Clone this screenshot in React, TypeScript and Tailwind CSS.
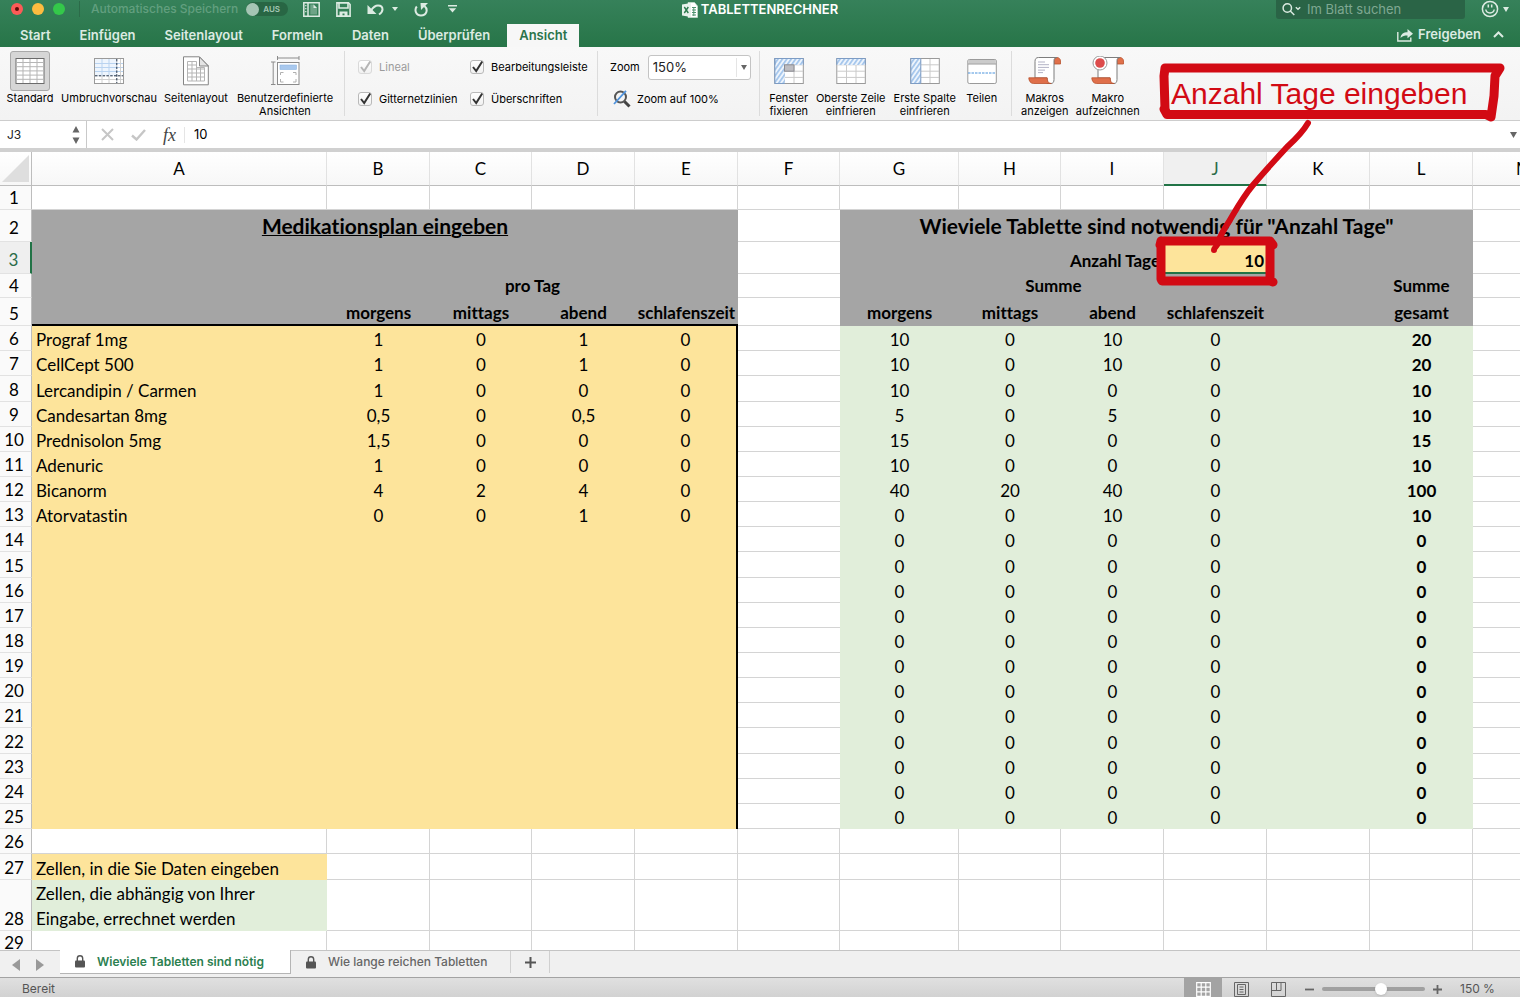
import { useState, type ReactNode } from 'react'
import clsx from 'clsx'

const TABS = ['Start', 'Einfügen', 'Seitenlayout', 'Formeln', 'Daten', 'Überprüfen', 'Ansicht']

const COLUMNS = [
  { name: 'A', width: 'w-[295px]' },
  { name: 'B', width: 'w-[103px]' },
  { name: 'C', width: 'w-[102px]' },
  { name: 'D', width: 'w-[103px]' },
  { name: 'E', width: 'w-[103px]' },
  { name: 'F', width: 'w-[102px]' },
  { name: 'G', width: 'w-[119px]' },
  { name: 'H', width: 'w-[102px]' },
  { name: 'I', width: 'w-[103px]' },
  { name: 'J', width: 'w-[103px]' },
  { name: 'K', width: 'w-[103px]' },
  { name: 'L', width: 'w-[103px]' },
  { name: 'M', width: 'w-[103px]' },
]

type Medication = { name: string; plan: string[]; sums: string[]; total: string }

const MEDICATIONS: Medication[] = [
  { name: 'Prograf 1mg', plan: ['1', '0', '1', '0'], sums: ['10', '0', '10', '0'], total: '20' },
  { name: 'CellCept 500', plan: ['1', '0', '1', '0'], sums: ['10', '0', '10', '0'], total: '20' },
  { name: 'Lercandipin / Carmen', plan: ['1', '0', '0', '0'], sums: ['10', '0', '0', '0'], total: '10' },
  { name: 'Candesartan 8mg', plan: ['0,5', '0', '0,5', '0'], sums: ['5', '0', '5', '0'], total: '10' },
  { name: 'Prednisolon 5mg', plan: ['1,5', '0', '0', '0'], sums: ['15', '0', '0', '0'], total: '15' },
  { name: 'Adenuric', plan: ['1', '0', '0', '0'], sums: ['10', '0', '0', '0'], total: '10' },
  { name: 'Bicanorm', plan: ['4', '2', '4', '0'], sums: ['40', '20', '40', '0'], total: '100' },
  { name: 'Atorvatastin', plan: ['0', '0', '1', '0'], sums: ['0', '0', '10', '0'], total: '10' },
]

const EMPTY: Medication = { name: '', plan: ['', '', '', ''], sums: ['0', '0', '0', '0'], total: '0' }

// Rows 6 to 25 of the sheet
const BODY_ROWS = Array.from({ length: 20 }, (_, i) => ({ row: i + 6, med: MEDICATIONS[i] ?? EMPTY }))

function StandardIcon() {
  return (
    <svg width="30" height="28" viewBox="0 0 30 28" fill="none">
      <rect x="1" y="1.5" width="28" height="25" fill="#fff" stroke="#6b6b6b" />
      <path d="M1 5.5h28M1 9.7h28M1 13.9h28M1 18.1h28M1 22.3h28M8 2v24M15 2v24M22 2v24" stroke="#b5b5b5" />
    </svg>
  )
}

function BreakPreviewIcon() {
  return (
    <svg width="30" height="28" viewBox="0 0 30 28" fill="none">
      <rect x=".5" y="1.5" width="29" height="25" fill="#fff" stroke="#9a9a9a" />
      <path d="M1 2h22v17H1z" fill="#eef5fd" />
      <path d="M1 6.5h28M1 10.5h28M1 14.5h28M8 2v16M15 2v16" stroke="#b9d3f0" />
      <path d="M1 22.5h28M8 19v7M15 19v7M26.5 2v24" stroke="#d0d0d0" />
      <path d="M22.8 2v24M1 18.8h28" stroke="#1f2f45" strokeDasharray="2.5 1.3" />
    </svg>
  )
}

function PageLayoutIcon() {
  return (
    <svg width="28" height="30" viewBox="0 0 28 30" fill="none">
      <path d="M1.5.8h16l8.800 9v19H1.500z" fill="#fff" stroke="#858585" />
      <path d="M17.500 1v9h8.800z" fill="#e4e4e4" stroke="#858585" />
      <path d="M5.500 5.500h9v6h8v13.500h-17zM5.500 9h9M5.500 13h17M5.500 17h17M5.500 21h17M10 5.500v19.500M14.500 10v15M18.500 12v13" stroke="#b5b5b5" />
    </svg>
  )
}

function CustomViewsIcon() {
  return (
    <svg width="30" height="30" viewBox="0 0 30 30" fill="none">
      <path d="M7.500 0v4M29 0v4M7.500 2h21.500M1 6h4.500M1 28.500h4.500M3.200 6v22" stroke="#8b8b8b" />
      <rect x="7.500" y="6.500" width="21.500" height="22" fill="#fff" stroke="#8b8b8b" />
      <rect x="10" y="9" width="16.500" height="4.500" fill="#a8c8ee" stroke="#8db4e2" strokeWidth=".6" />
      <path d="M10.500 19v-2.500h3M23 16.500h3v2.500M26 23v3h-3M13.500 26h-3v-3" stroke="#b0b0b0" />
    </svg>
  )
}

function FreezeIcon({ id, mode }: { id: string; mode: 'panes' | 'row' | 'column' }) {
  const top = mode !== 'column'
  const left = mode !== 'row'
  return (
    <svg width="30" height="28" viewBox="0 0 30 28" fill="none">
      <defs>
        <pattern id={id} width="3.600" height="3.600" patternUnits="userSpaceOnUse" patternTransform="rotate(35)">
          <rect width="3.600" height="3.600" fill="#edf4fc" />
          <rect width="1.700" height="3.600" fill="#a3c5ec" />
        </pattern>
      </defs>
      <rect x=".8" y="1.500" width="28.500" height="25" fill="#fff" stroke="#9a9a9a" />
      <path d="M1 7.800h28M1 14.200h28M1 20.400h28M10.500 2v24M20 2v24" stroke="#cacaca" />
      {top && <rect x="1" y="1.700" width="28" height="6.200" fill={`url(#${id})`} />}
      {left && <rect x="1" y="1.700" width="9.800" height="24.500" fill={`url(#${id})`} />}
      {top && <path d="M.8 7.800V1.500h28.500v6.300" stroke="#7d9cc4" />}
      {left && <path d="M10.800 1.500H.8v25h10" stroke="#7d9cc4" />}
      {mode === 'column' && <path d="M10.800 2v24" stroke="#7d9cc4" />}
      {mode === 'panes' && <rect x="10.500" y="7.800" width="9.500" height="6.400" fill="#bdbdc2" stroke="#8c8c92" />}
    </svg>
  )
}

function SplitIcon() {
  return (
    <svg width="30" height="28" viewBox="0 0 30 28" fill="none">
      <rect x=".8" y="2.500" width="28.500" height="24" rx="1.500" fill="#fff" stroke="#9a9a9a" />
      <path d="M1.300 3h27.500v3.800H1.300z" fill="#cbcbcb" />
      <path d="M1 7h28" stroke="#9a9a9a" />
      <path d="M1 16h28" stroke="#4a93dc" strokeDasharray="2.500 1" />
    </svg>
  )
}

function MacroIcon({ record }: { record?: boolean }) {
  return (
    <svg width="34" height="30" viewBox="0 0 34 30" fill="none">
      <path d="M26 8V4.500C26 2 27.500 1.500 29 1.500s3.500 1.200 3.500 3.500V8z" fill="#e0704a" stroke="#b9532f" strokeWidth=".8" />
      <path d="M29 1.500H10.500C8 1.500 7 3 7 5.500V22h12v5.500h4c2 0 3-1.500 3-4V4.500c0-2 1.300-3 3-3z" fill="#fff" stroke="#7d7d7d" />
      <path d="M.8 21.800h18.400c0 3 1 5.700 4 5.700H5.500c-3 0-4.700-2.700-4.700-5.700z" fill="#df6f4a" stroke="#b9532f" strokeWidth=".8" />
      {record ? (
        <>
          <circle cx="9" cy="7" r="7" fill="#fff" stroke="#9a9a9a" />
          <circle cx="9" cy="7" r="4.800" fill="#dd4c4c" />
        </>
      ) : (
        <path d="M10 6h7M10 8.700h11M10 11.400h11M10 14.100h7M10 16.600h5" stroke="#b3b3c6" />
      )}
    </svg>
  )
}

function RibbonButton({
  label,
  width,
  active,
  children,
}: {
  label: string[]
  width: string
  active?: boolean
  children: ReactNode
}) {
  return (
    <button type="button" className={clsx('flex flex-col items-center', width)}>
      <span
        className={clsx(
          'mb-px flex size-10 items-center justify-center rounded-[3px] border',
          active ? 'border-[#a9a9a9] bg-[#d6d6d6]' : 'border-transparent',
        )}
      >
        {children}
      </span>
      {label.map((line) => (
        <span key={line} className="block leading-[13px] whitespace-nowrap">
          {line}
        </span>
      ))}
    </button>
  )
}

function RibbonCheckbox({ label, disabled }: { label: string; disabled?: boolean }) {
  return (
    <label className={clsx('flex h-4 items-center gap-[6px] whitespace-nowrap', disabled && 'text-[#9b9b9b]')}>
      <span className="relative flex size-4">
        <input
          type="checkbox"
          defaultChecked
          disabled={disabled}
          className="m-px size-[14px] appearance-none rounded-[3px] border border-[#b9b9b9] bg-gradient-to-b from-white to-[#f1f1f1] disabled:border-[#d9d9d9]"
        />
        <svg className="pointer-events-none absolute inset-0" width="16" height="16" viewBox="0 0 16 16" fill="none">
          <path d="M4 8l3.200 4L13.200 2.500" stroke={disabled ? '#b5b5b5' : '#333'} strokeWidth="2" />
        </svg>
      </span>
      {label}
    </label>
  )
}

function Divider() {
  return <div className="my-1 w-px shrink-0 bg-[#dcdcdc]" />
}

function TitleBar() {
  return (
    <div className="grid h-[22px] grid-cols-[1fr_auto_1fr] text-white">
      <div className="flex h-[18px] items-center pl-[11px]">
        <div className="flex gap-[9px]">
          <button type="button" aria-label="Schließen" className="flex size-3 items-center justify-center rounded-full bg-[#fc5b57]">
            <span className="size-1 rounded-full bg-[#5c0b08]" />
          </button>
          <button type="button" aria-label="Minimieren" className="size-3 rounded-full bg-[#fdbc40]" />
          <button type="button" aria-label="Maximieren" className="size-3 rounded-full bg-[#34c84a]" />
        </div>
        <div className="ml-[14px] h-4 w-px bg-[#2c6b49]" />
        <span className="ml-[11px] text-[12px] font-medium whitespace-nowrap text-[#629f7f]">Automatisches Speichern</span>
        <button
          type="button"
          role="switch"
          aria-checked="false"
          className="ml-2 flex h-[14px] w-[42px] items-center gap-1 rounded-full bg-[#286644] text-[8px] font-semibold text-[#a3c6b3]"
        >
          <span className="size-[13px] rounded-full bg-[#a5c5b4]" />
          AUS
        </button>
        <div className="ml-[15px] flex items-center text-[#dcebe2]">
          <button type="button" aria-label="Vorlagen">
            <svg width="17" height="15" viewBox="0 0 17 15" fill="none" stroke="currentColor" strokeWidth="1.500">
              <path d="M.8.800h15.400v13.400H.8zM5 1v13" />
              <path d="M7.300 2.500h3.700l3 3v7H7.300z" fill="currentColor" stroke="none" opacity=".35" />
              <path d="M10.500 2.500v3.500H14z" fill="currentColor" stroke="none" />
              <path d="M2.800 3v1.200M2.800 6v1.200M2.800 9v1.200" strokeWidth="1.200" />
            </svg>
          </button>
          <button type="button" aria-label="Speichern" className="ml-4">
            <svg width="15" height="15" viewBox="0 0 15 15" fill="none" stroke="currentColor" strokeWidth="1.600">
              <path d="M.9.900h11.600l1.600 1.600v11.600H.9z" />
              <path d="M3 1v5h9V1" />
              <path d="M3.500 14.500V9.500h8v5h-3v-3h-2v3z" fill="currentColor" stroke="none" />
            </svg>
          </button>
          <button type="button" aria-label="Rückgängig" className="ml-4">
            <svg width="17" height="14" viewBox="0 0 17 14" fill="none" stroke="currentColor" strokeWidth="2">
              <path d="M.5 3v9h9z" fill="currentColor" stroke="none" />
              <path d="M4 8.500C6 5.500 8.300 3.500 11 3.500c2.600 0 4.500 1.500 4.500 4 0 2.200-1.500 3.600-3.500 5" />
            </svg>
          </button>
          <button type="button" aria-label="Rückgängig Optionen" className="ml-2">
            <svg width="6" height="4" viewBox="0 0 6 4" fill="currentColor"><path d="M0 0h6L3 4z" /></svg>
          </button>
          <button type="button" aria-label="Wiederholen" className="ml-4">
            <svg width="14" height="15" viewBox="0 0 14 15" fill="none" stroke="currentColor" strokeWidth="2">
              <path d="M2.800 4.500C.3 7.500 1.500 13.500 7 13.500s7.500-6 3.500-9.500" />
              <path d="M6.500 1H14L7 8z" fill="currentColor" stroke="none" />
            </svg>
          </button>
          <button type="button" aria-label="Symbolleiste anpassen" className="ml-5">
            <svg width="9" height="8" viewBox="0 0 9 8" fill="currentColor"><path d="M0 0h9v1.400H0zM.8 3.300h7.400L4.500 7.600z" /></svg>
          </button>
        </div>
      </div>
      <h1 className="flex h-[19px] items-center gap-[3px] text-[13px] font-semibold">
        <svg width="16" height="16" viewBox="0 0 16 16" fill="none">
          <path d="M6 .5h6.500L15.500 4v11.500H6z" fill="#fff" stroke="#cfe2d7" strokeWidth=".6" />
          <path d="M10 5.500h4M10 8h4M10 10.500h4M10 13h4M11.800 5v9" stroke="#4f9370" />
          <path d="M0 2.500l9-1.500v14L0 13.500z" fill="#e8f2ec" />
          <path d="M2.300 5l4 6M6.300 5l-4 6" stroke="#2b7a4d" strokeWidth="1.400" />
        </svg>
        TABLETTENRECHNER
      </h1>
      <div className="flex justify-end pr-[11px]">
        <label className="flex h-[19px] w-[189px] items-center gap-[6px] rounded-b-[3px] bg-[#2a6446] pl-[6px]">
          <svg className="shrink-0" width="19" height="13" viewBox="0 0 19 13" fill="none" stroke="#d9e9df" strokeWidth="1.500">
            <circle cx="5.300" cy="5" r="4.200" />
            <path d="M8.300 8l4 4M13.800 4.200l2.200 2 2.200-2" />
          </svg>
          <input
            type="search"
            aria-label="Im Blatt suchen"
            placeholder="Im Blatt suchen"
            className="w-full bg-transparent text-[13px] outline-none placeholder:text-[#7fa892]"
          />
        </label>
        <button type="button" aria-label="Feedback" className="ml-4 flex h-[18px] items-center gap-1 text-[#dcebe2]">
          <svg width="18" height="18" viewBox="0 0 18 18" fill="none" stroke="currentColor" strokeWidth="1.500">
            <circle cx="9" cy="9" r="7.600" />
            <path d="M4.800 9.500c.6 4.600 7.800 4.600 8.400 0M7.300 4.500v3M10.700 4.500v3" />
          </svg>
          <svg width="6" height="5" viewBox="0 0 6 5" fill="currentColor"><path d="M0 0h6L3 5z" /></svg>
        </button>
      </div>
    </div>
  )
}

function TabBar() {
  const [active, setActive] = useState('Ansicht')

  return (
    <div className="flex h-[25px] items-stretch pl-2 text-[13px] font-semibold text-[#dcebe2]">
      <nav className="flex gap-[5px] pt-[2px]">
        {TABS.map((tab) => (
          <button
            key={tab}
            type="button"
            onClick={() => setActive(tab)}
            className={clsx('px-3 leading-[21px]', tab === active && 'bg-[#f7f7f7] text-[#2b744b]')}
          >
            {tab}
          </button>
        ))}
      </nav>
      <button type="button" className="ml-auto flex items-center gap-1">
        <svg width="17" height="14" viewBox="0 0 17 14" fill="none" stroke="currentColor" strokeWidth="1.400">
          <path d="M.8 4v9h13V9.500" />
          <path d="M3.500 10c.5-4 3-5.700 7-5.700V1L16 5.800l-5.500 4.500V7.500c-3 0-5 .5-7 2.500z" fill="currentColor" stroke="none" />
        </svg>
        Freigeben
      </button>
      <button type="button" aria-label="Menüband minimieren" className="mr-4 ml-3">
        <svg width="11" height="7" viewBox="0 0 11 7" fill="none" stroke="currentColor" strokeWidth="2"><path d="M1 6l4.500-4.500L10 6" /></svg>
      </button>
    </div>
  )
}

function Ribbon() {
  return (
    <div className="flex h-[74px] border-b border-[#cdcdcd] bg-gradient-to-b from-[#f8f8f8] to-[#f3f3f3] text-[11px] text-black">
      <div className="mr-2 flex items-start pt-1">
        <RibbonButton label={['Standard']} width="w-[60px]" active><StandardIcon /></RibbonButton>
        <RibbonButton label={['Umbruchvorschau']} width="w-[98px]"><BreakPreviewIcon /></RibbonButton>
        <RibbonButton label={['Seitenlayout']} width="w-[76px]"><PageLayoutIcon /></RibbonButton>
        <RibbonButton label={['Benutzerdefinierte', 'Ansichten']} width="w-[102px]"><CustomViewsIcon /></RibbonButton>
      </div>
      <Divider />
      <div className="grid grid-cols-[112px_116px] content-start gap-y-4 px-3 pt-3">
        <RibbonCheckbox label="Lineal" disabled />
        <RibbonCheckbox label="Bearbeitungsleiste" />
        <RibbonCheckbox label="Gitternetzlinien" />
        <RibbonCheckbox label="Überschriften" />
      </div>
      <Divider />
      <div className="flex flex-col gap-[10px] px-2 pt-2 pl-3">
        <label className="flex items-center gap-2">
          Zoom
          <span className="relative flex">
            <select className="h-[25px] w-[103px] appearance-none rounded-[3px] border border-[#c4c4c4] bg-white pl-1 text-[13px] text-[#222]">
              <option>150%</option>
            </select>
            <span className="pointer-events-none absolute inset-y-[3px] right-0 flex w-[15px] items-center justify-center border-l border-[#e5e5e5]">
              <svg width="6" height="5" viewBox="0 0 6 5" fill="#666"><path d="M0 0h6L3 5z" /></svg>
            </span>
          </span>
        </label>
        <button type="button" className="flex items-center gap-[6px] pl-[3px]">
          <svg width="18" height="18" viewBox="0 0 18 18" fill="none">
            <circle cx="7.500" cy="7" r="5.500" stroke="#555" strokeWidth="2" />
            <path d="M11.500 11.500l5 5" stroke="#444" strokeWidth="3" />
            <path d="M1 14L13 .8" stroke="#4f93dd" strokeWidth="1.800" />
          </svg>
          Zoom auf 100%
        </button>
      </div>
      <Divider />
      <div className="flex items-start pt-1 pr-[9px] pl-1">
        <RibbonButton label={['Fenster', 'fixieren']} width="w-[50px]"><FreezeIcon id="panes" mode="panes" /></RibbonButton>
        <RibbonButton label={['Oberste Zeile', 'einfrieren']} width="w-[74px]"><FreezeIcon id="row" mode="row" /></RibbonButton>
        <RibbonButton label={['Erste Spalte', 'einfrieren']} width="w-[74px]"><FreezeIcon id="column" mode="column" /></RibbonButton>
        <RibbonButton label={['Teilen']} width="w-[40px]"><SplitIcon /></RibbonButton>
      </div>
      <Divider />
      <div className="flex items-start pt-1 pl-1">
        <RibbonButton label={['Makros', 'anzeigen']} width="w-[58px]"><MacroIcon /></RibbonButton>
        <RibbonButton label={['Makro', 'aufzeichnen']} width="w-[68px]"><MacroIcon record /></RibbonButton>
      </div>
    </div>
  )
}

function FormulaBar() {
  return (
    <div className="flex h-[31px] items-center border-b-4 border-[#d0d0d0] bg-white">
      <input aria-label="Namenfeld" defaultValue="J3" className="w-[70px] pl-[7px] text-[12px] text-[#222] outline-none" />
      <svg className="mr-1" width="12" height="20" viewBox="0 0 12 20" fill="#666"><path d="M2.500 7.500L6 1l3.500 6.500zM2.500 12.500L6 19l3.500-6.500z" /></svg>
      <div className="h-full w-px bg-[#c9c9c9]" />
      <button type="button" aria-label="Abbrechen" className="ml-[14px]">
        <svg width="13" height="13" viewBox="0 0 13 13" fill="none" stroke="#c6c6c6" strokeWidth="2"><path d="M1 1l11 11M12 1L1 12" /></svg>
      </button>
      <button type="button" aria-label="Eingeben" className="ml-[17px]">
        <svg width="15" height="12" viewBox="0 0 15 12" fill="none" stroke="#c6c6c6" strokeWidth="2.400"><path d="M1 6.500l4.500 4L14 1" /></svg>
      </button>
      <button type="button" aria-label="Funktion einfügen" className="ml-[17px] font-['Liberation_Serif',serif] text-[18px] leading-5 text-[#444] italic">
        fx
      </button>
      <div className="ml-2 h-4 w-px bg-[#e5e5e5]" />
      <input aria-label="Bearbeitungsleiste" defaultValue="10" className="min-w-0 flex-1 pt-px pl-[9px] text-[13px] text-black outline-none" />
      <svg className="mr-[3px]" width="7" height="6" viewBox="0 0 7 6" fill="#666"><path d="M0 0h7L3.500 6z" /></svg>
    </div>
  )
}

const GRID = 'border-r border-b border-[#d4d4d4]'
const GREY = 'border-b border-transparent bg-[#a5a5a5] font-bold'
const YELLOW = 'bg-[#fde49b]'
const GREEN = 'bg-[#e1eeda]'

function RowHeader({ row, selected }: { row: number; selected?: boolean }) {
  return (
    <th
      scope="row"
      className={clsx(
        'border-r border-b border-b-[#e2e2e2] pr-[3px] text-center align-bottom font-normal',
        (row === 2 || row === 3) && 'pb-[2px]',
        selected ? 'border-r-2 border-r-[#217346] bg-[#efefef] text-[#2b6b48]' : 'border-r-[#bdbdbd] bg-[#fafafa]',
      )}
    >
      {row}
    </th>
  )
}

function EmptyCells({ count }: { count: number }) {
  return Array.from({ length: count }, (_, i) => <td key={i} className={GRID} />)
}

function BodyRow({ row, med }: { row: number; med: Medication }) {
  return (
    <tr className={row % 7 === 1 ? 'h-[26px]' : 'h-[25px]'}>
      <RowHeader row={row} />
      <td className={clsx(YELLOW, 'pl-1')}>{med.name}</td>
      {med.plan.map((value, i) => (
        <td key={i} className={clsx(YELLOW, 'text-center', i === 3 && 'border-r-2 border-black')}>{value}</td>
      ))}
      <td className="border-b border-[#d4d4d4]" />
      {med.sums.map((value, i) => (
        <td key={i} className={clsx(GREEN, 'text-center')}>{value}</td>
      ))}
      <td className={GREEN} />
      <td className={clsx(GREEN, 'text-center font-bold')}>{med.total}</td>
      <EmptyCells count={1} />
    </tr>
  )
}

function Sheet() {
  return (
    <main className="min-h-0 flex-1 overflow-hidden bg-white">
      <table className="w-[1576px] table-fixed border-separate border-spacing-0 font-[Lato,Carlito,sans-serif] text-[17px] leading-[23px] whitespace-nowrap text-black [font-variant-ligatures:none] [&_td]:align-bottom">
        <thead>
          <tr className="h-[34px] bg-gradient-to-b from-white to-[#f7f7f7]">
            <th className="w-8 border-r border-b border-[#bdbdbd]">
              <svg className="ml-[2px]" width="28" height="28" viewBox="0 0 28 28" fill="#dedede"><path d="M27 0v27H0z" /></svg>
            </th>
            {COLUMNS.map(({ name, width }) => (
              <th
                key={name}
                scope="col"
                className={clsx(
                  'border-r border-r-[#e2e2e2] font-normal',
                  width,
                  name === 'J' ? 'border-b-2 border-b-[#217346] bg-[#f0f0f0] text-[#2b6b48]' : 'border-b border-b-[#bdbdbd]',
                )}
              >
                {name}
              </th>
            ))}
          </tr>
        </thead>
        <tbody>
          <tr className="h-[24px]">
            <RowHeader row={1} />
            <EmptyCells count={13} />
          </tr>
          <tr className="h-[32px]">
            <RowHeader row={2} />
            <td colSpan={5} className={clsx(GREY, 'pb-1 text-center text-[21px] underline decoration-1')}>Medikationsplan eingeben</td>
            <td className="border-b border-[#d4d4d4]" />
            <td colSpan={6} className={clsx(GREY, 'pb-1 text-center text-[21px]')}>Wieviele Tablette sind notwendig für "Anzahl Tage"</td>
            <EmptyCells count={1} />
          </tr>
          <tr className="h-[32px]">
            <RowHeader row={3} selected />
            <td colSpan={5} className={GREY} />
            <td className="border-b border-[#d4d4d4]" />
            <td colSpan={3} className={clsx(GREY, 'pr-1 pb-px text-right')}>Anzahl Tage</td>
            <td className={clsx(YELLOW, 'border-b-2 border-[#217346] pr-[3px] text-right font-bold')}>10</td>
            <td colSpan={2} className={GREY} />
            <EmptyCells count={1} />
          </tr>
          <tr className="h-[24px]">
            <RowHeader row={4} />
            <td className={GREY} />
            <td colSpan={4} className={clsx(GREY, 'text-center')}>pro Tag</td>
            <td className="border-b border-[#d4d4d4]" />
            <td colSpan={4} className={clsx(GREY, 'text-center')}>Summe</td>
            <td className={GREY} />
            <td className={clsx(GREY, 'text-center')}>Summe</td>
            <EmptyCells count={1} />
          </tr>
          <tr className="h-[28px]">
            <RowHeader row={5} />
            <td className="border-b-2 border-black bg-[#a5a5a5]" />
            {['morgens', 'mittags', 'abend', 'schlafenszeit'].map((time) => (
              <td key={time} className="border-b-2 border-black bg-[#a5a5a5] text-center font-bold">{time}</td>
            ))}
            <td className="border-b border-[#d4d4d4]" />
            {['morgens', 'mittags', 'abend', 'schlafenszeit', '', 'gesamt'].map((time) => (
              <td key={time} className={clsx(GREY, 'pb-px text-center')}>{time}</td>
            ))}
            <EmptyCells count={1} />
          </tr>
          {BODY_ROWS.map(({ row, med }) => (
            <BodyRow key={row} row={row} med={med} />
          ))}
          <tr className="h-[25px]">
            <RowHeader row={26} />
            <EmptyCells count={13} />
          </tr>
          <tr className="h-[26px]">
            <RowHeader row={27} />
            <td className={clsx(YELLOW, 'pl-1')}>Zellen, in die Sie Daten eingeben</td>
            <EmptyCells count={12} />
          </tr>
          <tr className="h-[51px]">
            <RowHeader row={28} />
            <td className={clsx(GREEN, 'pl-1 leading-[25px]')}>
              Zellen, die abhängig von Ihrer
              <br />
              Eingabe, errechnet werden
            </td>
            <EmptyCells count={12} />
          </tr>
          <tr className="h-[24px]">
            <RowHeader row={29} />
            <EmptyCells count={13} />
          </tr>
        </tbody>
      </table>
    </main>
  )
}

function LockIcon() {
  return (
    <svg width="10" height="13" viewBox="0 0 10 13" fill="none">
      <path d="M2.300 6V3.500a2.700 2.700 0 015.400 0V6" stroke="#555" strokeWidth="1.400" />
      <rect y="5.500" width="10" height="7" rx="1" fill="#555" />
    </svg>
  )
}

function SheetTabs() {
  return (
    <div className="flex h-[27px] items-start border-t border-[#c4c4c4] bg-[#f0f0f0] text-[12px] text-[#666]">
      <div className="flex h-[27px] w-[60px] items-center gap-4 pl-3">
        <button type="button" aria-label="Vorheriges Blatt">
          <svg width="8" height="12" viewBox="0 0 8 12" fill="#999"><path d="M8 0v12L0 6z" /></svg>
        </button>
        <button type="button" aria-label="Nächstes Blatt">
          <svg width="8" height="12" viewBox="0 0 8 12" fill="#999"><path d="M0 0v12l8-6z" /></svg>
        </button>
      </div>
      <button type="button" className="-mt-px flex h-6 w-[231px] items-center gap-3 border-r border-b border-[#b5b5b5] bg-white pl-[15px] font-semibold whitespace-nowrap text-[#2b8050]">
        <LockIcon />
        Wieviele Tabletten sind nötig
      </button>
      <button type="button" className="flex h-[22px] w-[220px] items-center gap-3 border-r border-[#d0d0d0] pl-[15px] font-medium whitespace-nowrap">
        <LockIcon />
        Wie lange reichen Tabletten
      </button>
      <button type="button" aria-label="Blatt hinzufügen" className="flex h-[22px] w-[39px] items-center justify-center border-r border-[#d0d0d0]">
        <svg width="11" height="11" viewBox="0 0 11 11" stroke="#555" strokeWidth="2"><path d="M0 5.500h11M5.500 0v11" /></svg>
      </button>
    </div>
  )
}

function StatusBar() {
  return (
    <footer className="flex h-5 items-stretch border-t border-[#a3a3a3] bg-gradient-to-b from-[#e0e0e0] to-[#d2d2d2] text-[12px] text-[#555]">
      <span className="self-center pt-[3px] pl-[22px]">Bereit</span>
      <button type="button" aria-label="Normal" className="ml-auto flex w-[38px] items-center justify-center bg-[#a3a3a3] pt-1">
        <svg width="15" height="15" viewBox="0 0 15 15" fill="none" stroke="#fff" strokeWidth="1.200"><path d="M.7.700h13.600v13.600H.7zM5.200 1v13M9.800 1v13M1 5.200h13M1 9.800h13" /></svg>
      </button>
      <button type="button" aria-label="Seitenlayout" className="flex w-[38px] items-center justify-center pt-1">
        <svg width="15" height="15" viewBox="0 0 15 15" fill="none" stroke="#666"><path d="M.5.500h14v14H.5zM3.500 2.500h8v10h-8zM5.500 5h4M5.500 7.500h4M5.500 10h4" /></svg>
      </button>
      <button type="button" aria-label="Umbruchvorschau" className="flex w-[36px] items-center justify-center pt-1">
        <svg width="15" height="15" viewBox="0 0 15 15" fill="none" stroke="#666"><path d="M.5.500h14v14H.5zM1 8.500h9V1M5.500 1v7.500" /></svg>
      </button>
      <button type="button" aria-label="Verkleinern" className="ml-[9px] pt-1">
        <svg width="9" height="9" viewBox="0 0 9 9" stroke="#666" strokeWidth="1.800"><path d="M0 4.500h9" /></svg>
      </button>
      <input
        type="range"
        aria-label="Zoom"
        min={0}
        max={100}
        defaultValue={58}
        className="mt-[9px] ml-2 h-1 w-[103px] appearance-none self-start rounded-full bg-[#a0a0a0] [&::-webkit-slider-thumb]:size-3 [&::-webkit-slider-thumb]:appearance-none [&::-webkit-slider-thumb]:rounded-full [&::-webkit-slider-thumb]:bg-white [&::-webkit-slider-thumb]:shadow"
      />
      <button type="button" aria-label="Vergrößern" className="ml-2 pt-1">
        <svg width="9" height="9" viewBox="0 0 9 9" stroke="#666" strokeWidth="1.800"><path d="M0 4.500h9M4.500 0v9" /></svg>
      </button>
      <span className="w-[78px] self-center pt-[3px] pl-[18px]">150 %</span>
    </footer>
  )
}

// Hand-drawn note that points at the cell for the number of days
function Annotation() {
  return (
    <div className="pointer-events-none absolute top-[60px] left-[1150px] text-[#d20a14]">
      <svg width="360" height="232" viewBox="0 0 360 232" fill="none" stroke="currentColor" strokeWidth="9" strokeLinecap="round" strokeLinejoin="round">
        <path d="M15 8h335l-5 8-1 20-3 21M15 8l-1 8 1 33 2 5.500M14 49l3 5.500h319l5 2.500" />
        <path d="M158 63c-4 7-10 14-21 24-12 13-23 25-34 38-10 12-16 23-23 35-6 9-10 16-12 23-1 3-4 5-4 7" strokeWidth="6" />
        <path d="M11 181h109l3 4M11 181v38l1 2h108l3 1M120 181v40M10 185l1-4" />
      </svg>
      <span className="absolute top-4 left-[21px] font-['Liberation_Sans',Arial,sans-serif] text-[30px] leading-9 whitespace-nowrap">
        Anzahl Tage eingeben
      </span>
    </div>
  )
}

export default function App() {
  return (
    <div className="relative flex h-screen flex-col overflow-hidden font-[Inter,sans-serif]">
      <header className="bg-gradient-to-b from-[#36815a] to-[#277548]">
        <TitleBar />
        <TabBar />
      </header>
      <Ribbon />
      <FormulaBar />
      <Sheet />
      <SheetTabs />
      <StatusBar />
      <Annotation />
    </div>
  )
}
